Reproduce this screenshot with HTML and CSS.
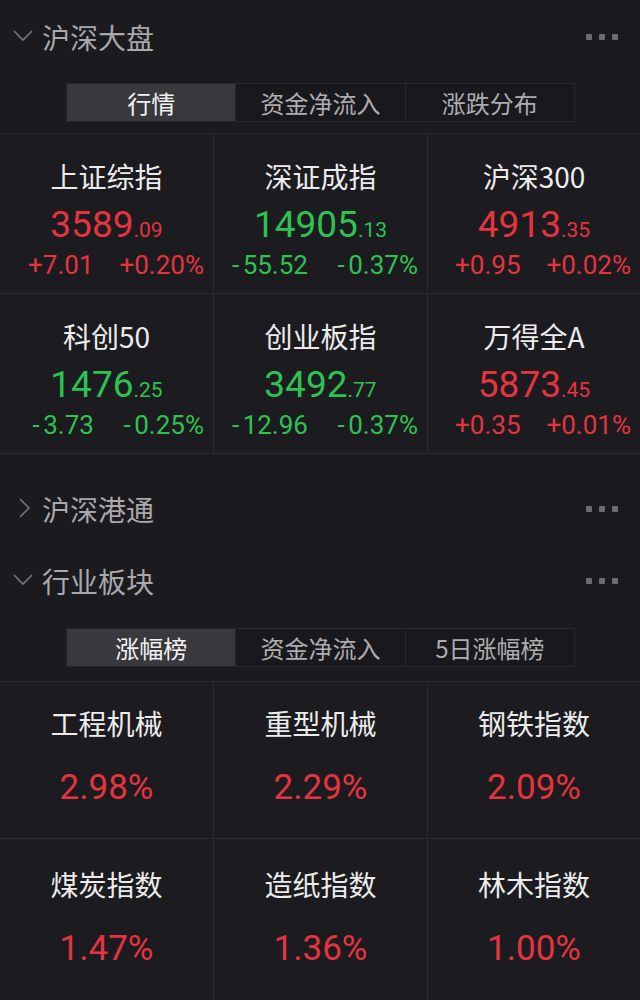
FILE: index.html
```html
<!DOCTYPE html>
<html lang="zh-CN">
<head>
<meta charset="utf-8">
<link rel="stylesheet" href="styles.css">
</head>
<body>
<div class="page">
  <div class="sec-head">
    <svg class="chev" viewBox="0 0 20 12" width="20" height="12"><polyline points="1,1 10,10 19,1" fill="none" stroke="#77767a" stroke-width="1.6"/></svg>
    <span class="sec-title">沪深大盘</span>
    <span class="dots"><i></i><i></i><i></i></span>
  </div>
  <div class="tabs">
    <div class="tab active">行情</div>
    <div class="tab">资金净流入</div>
    <div class="tab">涨跌分布</div>
  </div>
  <div class="grid idx">
    <div class="cell">
      <div class="name">上证综指</div>
      <div class="price up">3589<small>.09</small></div>
      <div class="chg up"><span>+7.01</span><span>+0.20%</span></div>
    </div>
    <div class="cell">
      <div class="name">深证成指</div>
      <div class="price down">14905<small>.13</small></div>
      <div class="chg down"><span><b class="sign">-</b>55.52</span><span><b class="sign">-</b>0.37%</span></div>
    </div>
    <div class="cell">
      <div class="name">沪深300</div>
      <div class="price up">4913<small>.35</small></div>
      <div class="chg up"><span>+0.95</span><span>+0.02%</span></div>
    </div>
    <div class="cell">
      <div class="name">科创50</div>
      <div class="price down">1476<small>.25</small></div>
      <div class="chg down"><span><b class="sign">-</b>3.73</span><span><b class="sign">-</b>0.25%</span></div>
    </div>
    <div class="cell">
      <div class="name">创业板指</div>
      <div class="price down">3492<small>.77</small></div>
      <div class="chg down"><span><b class="sign">-</b>12.96</span><span><b class="sign">-</b>0.37%</span></div>
    </div>
    <div class="cell">
      <div class="name">万得全A</div>
      <div class="price up">5873<small>.45</small></div>
      <div class="chg up"><span>+0.35</span><span>+0.01%</span></div>
    </div>
  </div>

  <div class="sec-head sec-2">
    <svg class="chev right" viewBox="0 0 12 20" width="12" height="20"><polyline points="1,1 10,10 1,19" fill="none" stroke="#77767a" stroke-width="1.6"/></svg>
    <span class="sec-title">沪深港通</span>
    <span class="dots"><i></i><i></i><i></i></span>
  </div>
  <div class="sec-head sec-3">
    <svg class="chev" viewBox="0 0 20 12" width="20" height="12"><polyline points="1,1 10,10 19,1" fill="none" stroke="#77767a" stroke-width="1.6"/></svg>
    <span class="sec-title">行业板块</span>
    <span class="dots"><i></i><i></i><i></i></span>
  </div>
  <div class="tabs tabs-2">
    <div class="tab active">涨幅榜</div>
    <div class="tab">资金净流入</div>
    <div class="tab">5日涨幅榜</div>
  </div>
  <div class="grid ind">
    <div class="cell"><div class="name">工程机械</div><div class="pct up">2.98%</div></div>
    <div class="cell"><div class="name">重型机械</div><div class="pct up">2.29%</div></div>
    <div class="cell"><div class="name">钢铁指数</div><div class="pct up">2.09%</div></div>
    <div class="cell"><div class="name">煤炭指数</div><div class="pct up">1.47%</div></div>
    <div class="cell"><div class="name">造纸指数</div><div class="pct up">1.36%</div></div>
    <div class="cell"><div class="name">林木指数</div><div class="pct up">1.00%</div></div>
  </div>
</div>
</body>
</html>
```

FILE: styles.css
```css
html, body {
  margin: 0;
  padding: 0;
  background: #1b1a1e;
}
body {
  width: 640px;
  height: 1000px;
  overflow: hidden;
  font-family: "Noto Sans CJK SC", "Noto Sans", sans-serif;
  color: #e9e9e9;
}
.page {
  display: flex;
  flex-direction: column;
}
.sec-head {
  height: 74px;
  display: flex;
  align-items: center;
  padding-left: 13px;
  padding-right: 22px;
}
.sec-2 {
  height: 72px;
  margin-top: 19px;
}
.sec-3 {
  height: 72px;
}
.chev {
  width: 20px;
  flex: none;
  margin-right: 9px;
  margin-top: -3px;
}
.chev.right {
  width: 12px;
  margin-left: 6px;
  margin-right: 11px;
}
.sec-title {
  font-size: 28px;
  color: #a9a8ab;
  line-height: 1;
}
.dots {
  margin-left: auto;
  display: flex;
  gap: 7px;
}
.dots i {
  display: block;
  width: 6px;
  height: 6px;
  background: #6c6b6f;
  border-radius: 1px;
}
.tabs {
  margin: 9px 0 0 66px;
  width: 509px;
  height: 39px;
  display: flex;
  border: 1px solid #27262a;
  box-sizing: border-box;
  background: #19181c;
}
.tabs-2 {
  margin-top: 11px;
}
.tab {
  flex: 1;
  display: flex;
  align-items: center;
  justify-content: center;
  font-size: 24px;
  color: #adacaf;
  border-left: 1px solid #29282c;
}
.tab:first-child {
  border-left: none;
}
.tab.active {
  background: #39383c;
  color: #f2f2f2;
}
.grid {
  display: grid;
  grid-template-columns: 213px 213px 1fr;
  gap: 1px;
  background: #2b2a2e;
  border-top: 1px solid #2b2a2e;
  border-bottom: 1px solid #2b2a2e;
}
.idx {
  margin-top: 11px;
  grid-template-rows: 159px 159px;
}
.ind {
  margin-top: 14px;
  grid-template-rows: 156px 170px;
}
.cell {
  background: #1c1b1f;
  display: flex;
  flex-direction: column;
  align-items: center;
}
.name {
  font-size: 28px;
  line-height: 30px;
  color: #ececec;
  margin-top: 27px;
}
.price {
  font-family: "Roboto", "Liberation Sans", sans-serif;
  font-size: 37px;
  line-height: 40px;
  margin-top: 14px;
}
.price small {
  font-size: 21px;
}
.chg {
  font-family: "Roboto", "Liberation Sans", sans-serif;
  font-size: 26px;
  line-height: 28px;
  margin-top: 1px;
  align-self: stretch;
  display: flex;
  justify-content: flex-end;
  padding-right: 9px;
  gap: 26px;
}
.sign {
  display: inline-block;
  width: 0.55em;
  text-align: center;
  font-weight: 400;
}
.ind .name {
  margin-top: 26px;
}
.ind .cell:nth-child(n+4) {
  padding-top: 4px;
}
.pct {
  font-family: "Roboto", "Liberation Sans", sans-serif;
  font-size: 35px;
  line-height: 40px;
  margin-top: 30px;
}
.up {
  color: #e5343f;
}
.down {
  color: #2cc352;
}
```
